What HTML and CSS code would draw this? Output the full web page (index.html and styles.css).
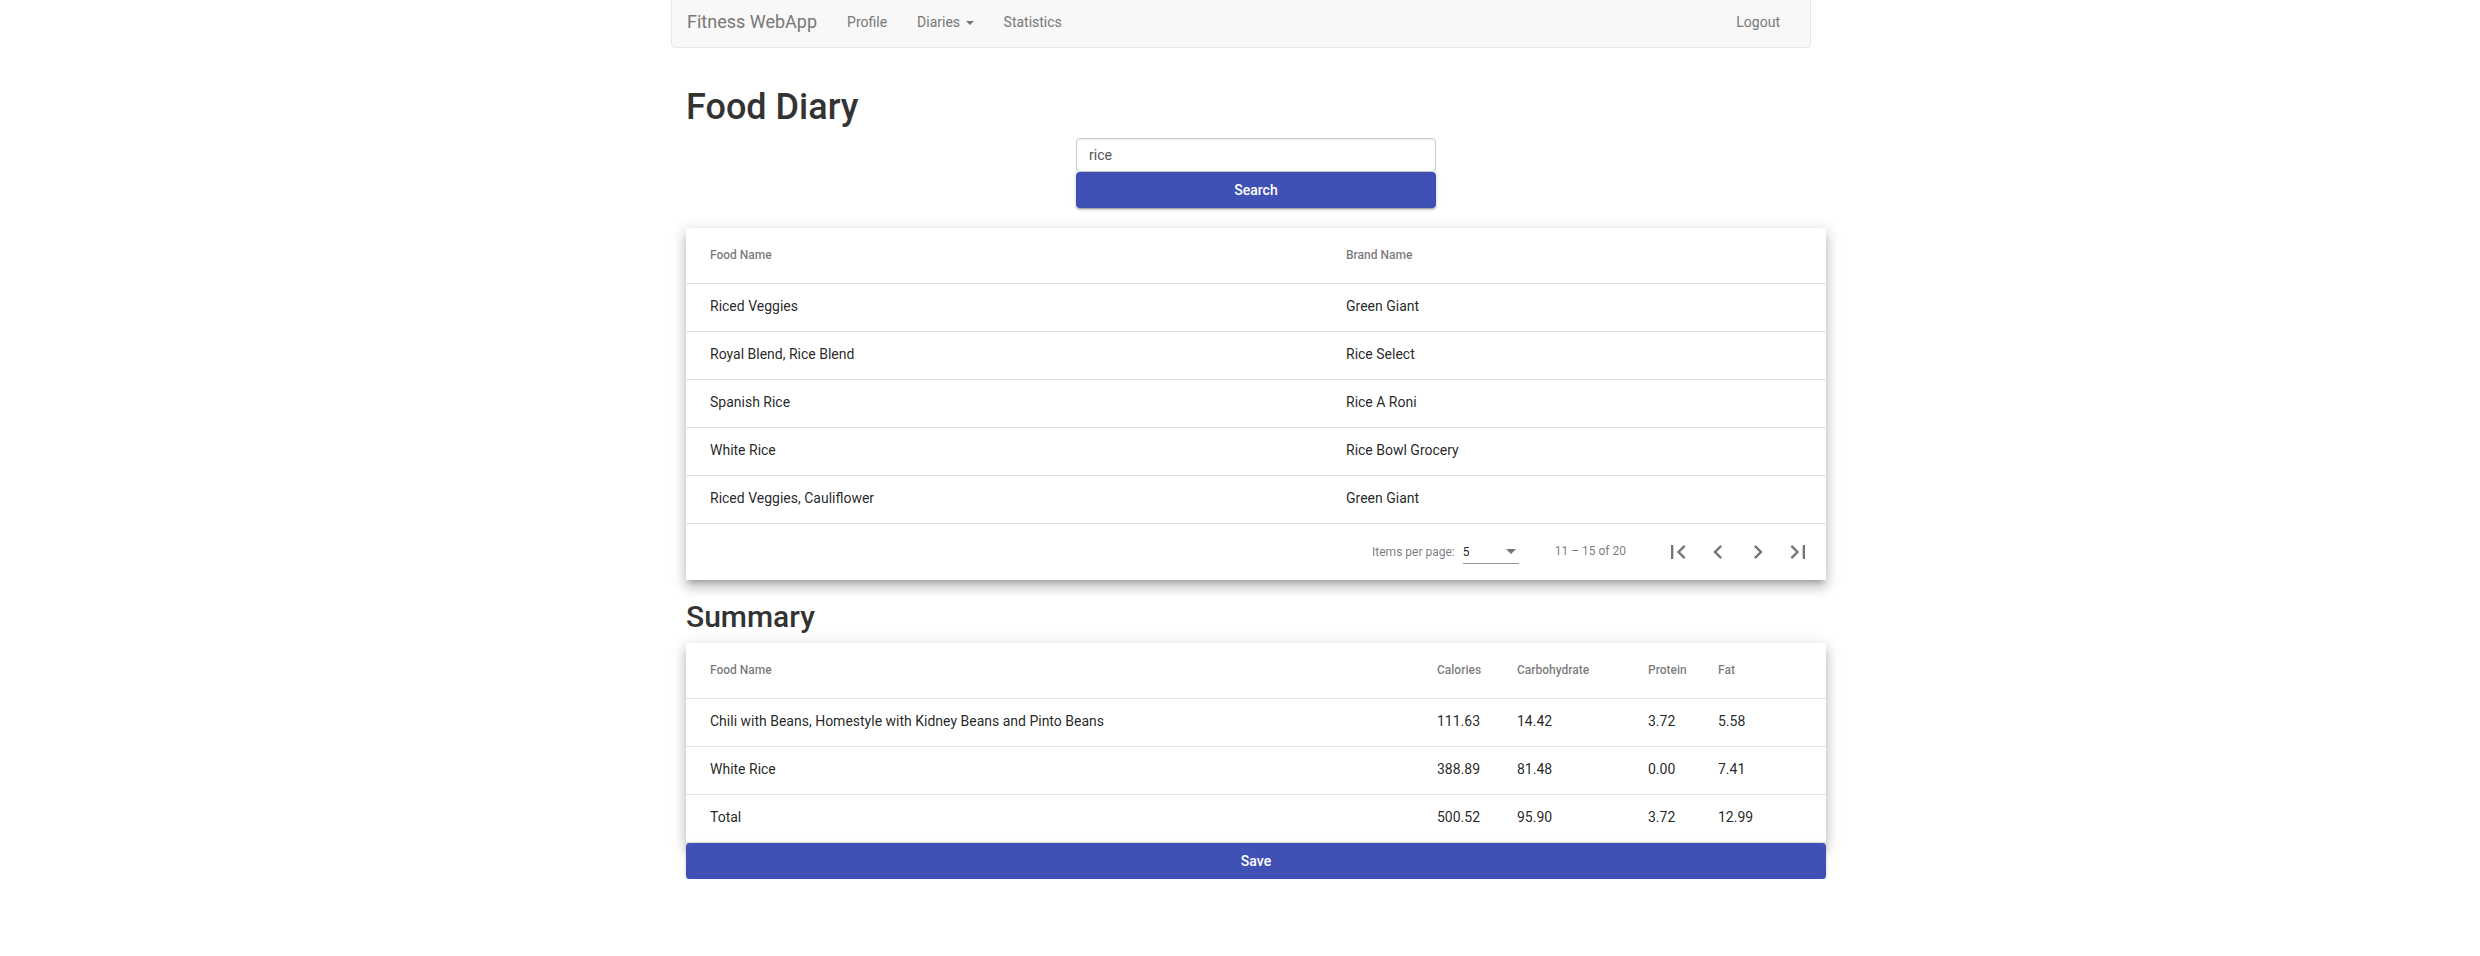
FILE: index.html
```html
<!DOCTYPE html>
<html lang="en">
<head>
<meta charset="utf-8">
<title>Fitness WebApp</title>
<link rel="stylesheet" href="styles.css">
</head>
<body>
<div class="page">
  <nav class="navbar">
    <div class="nav-left">
      <a class="brand">Fitness WebApp</a>
      <a class="nav-link">Profile</a>
      <a class="nav-link">Diaries <span class="caret"></span></a>
      <a class="nav-link">Statistics</a>
    </div>
    <div class="nav-right">
      <a class="nav-link">Logout</a>
    </div>
  </nav>

  <main class="content">
    <h1 class="title">Food Diary</h1>
    <form class="search-form">
      <input class="search-input" type="text" value="rice">
      <button class="btn-primary" type="button">Search</button>
    </form>

    <div class="card">
      <table class="mtable results">
        <colgroup><col class="c-food"><col class="c-brand"></colgroup>
        <thead>
          <tr class="hrow"><th>Food Name</th><th>Brand Name</th></tr>
        </thead>
        <tbody>
          <tr class="drow"><td>Riced Veggies</td><td>Green Giant</td></tr>
          <tr class="drow"><td>Royal Blend, Rice Blend</td><td>Rice Select</td></tr>
          <tr class="drow"><td>Spanish Rice</td><td>Rice A Roni</td></tr>
          <tr class="drow"><td>White Rice</td><td>Rice Bowl Grocery</td></tr>
          <tr class="drow"><td>Riced Veggies, Cauliflower</td><td>Green Giant</td></tr>
        </tbody>
      </table>
      <div class="paginator">
        <div class="page-size">
          <span class="page-size-label">Items per page:</span>
          <div class="select"><span class="select-value">5</span><span class="select-arrow"></span></div>
        </div>
        <div class="range-label">11 – 15 of 20</div>
        <button class="icon-btn" type="button" aria-label="First page"><svg viewBox="0 0 24 24"><path d="M18.41 16.59L13.82 12l4.59-4.59L17 6l-6 6 6 6zM6 6h2v12H6z"/></svg></button>
        <button class="icon-btn" type="button" aria-label="Previous page"><svg viewBox="0 0 24 24"><path d="M15.41 7.41L14 6l-6 6 6 6 1.41-1.41L10.83 12z"/></svg></button>
        <button class="icon-btn" type="button" aria-label="Next page"><svg viewBox="0 0 24 24"><path d="M10 6L8.59 7.41 13.17 12l-4.58 4.59L10 18l6-6z"/></svg></button>
        <button class="icon-btn" type="button" aria-label="Last page"><svg viewBox="0 0 24 24"><path d="M5.59 7.41L10.18 12l-4.59 4.59L7 18l6-6-6-6zM16 6h2v12h-2z"/></svg></button>
      </div>
    </div>

    <h2 class="subtitle">Summary</h2>
    <div class="card">
      <table class="mtable summary">
        <colgroup><col class="s-food"><col class="s-cal"><col class="s-carb"><col class="s-prot"><col class="s-fat"></colgroup>
        <thead>
          <tr class="hrow"><th>Food Name</th><th>Calories</th><th>Carbohydrate</th><th>Protein</th><th>Fat</th></tr>
        </thead>
        <tbody>
          <tr class="drow"><td>Chili with Beans, Homestyle with Kidney Beans and Pinto Beans</td><td>111.63</td><td>14.42</td><td>3.72</td><td>5.58</td></tr>
          <tr class="drow"><td>White Rice</td><td>388.89</td><td>81.48</td><td>0.00</td><td>7.41</td></tr>
          <tr class="drow"><td>Total</td><td>500.52</td><td>95.90</td><td>3.72</td><td>12.99</td></tr>
        </tbody>
      </table>
    </div>
    <button class="btn-primary btn-block" type="button">Save</button>
  </main>
</div>
</body>
</html>
```
FILE: styles.css
```css
* { box-sizing: border-box; }

html, body {
  margin: 0;
  background: #fff;
}

body {
  padding-left: 2px;
  font-family: Roboto, "Helvetica Neue", sans-serif;
  font-size: 14px;
  line-height: 1.42857;
  color: #333;
}

.page {
  width: 1140px;
  margin: 0 auto;
}

/* Navbar */
.navbar {
  margin-top: -4px;
  margin-bottom: 20px;
  min-height: 52px;
  background: #f8f8f8;
  border: 1px solid #e7e7e7;
  border-radius: 4px;
  display: flex;
  justify-content: space-between;
  padding: 0 15px;
}

.nav-left, .nav-right { display: flex; }

.brand {
  margin-left: -15px;
  padding: 15px;
  height: 50px;
  font-size: 18px;
  line-height: 20px;
  color: #777;
}

.nav-link {
  padding: 15px;
  line-height: 20px;
  font-size: 14px;
  color: #777;
}

.caret {
  display: inline-block;
  width: 0;
  height: 0;
  margin-left: 2px;
  vertical-align: middle;
  border-top: 4px solid;
  border-right: 4px solid transparent;
  border-left: 4px solid transparent;
}

/* Content */
.content {
  display: flow-root;
  margin-left: 15px;
  width: 1140px;
}

.title {
  font-size: 36px;
  font-weight: 500;
  line-height: 1.1;
  margin: 20px 0 10px;
  color: #333;
}

.subtitle {
  font-size: 30px;
  font-weight: 500;
  line-height: 1.1;
  margin: 20px 0 10px;
  color: #333;
}

.search-form {
  width: 360px;
  margin: 0 auto 20px;
  display: flex;
  flex-direction: column;
}

.search-input {
  height: 34px;
  padding: 6px 12px;
  font-family: inherit;
  font-size: 14px;
  color: #555;
  background: #fff;
  border: 1px solid #ccc;
  border-radius: 4px;
  box-shadow: inset 0 1px 1px rgba(0,0,0,.075);
  outline: none;
}

.btn-primary {
  height: 36px;
  padding: 0 16px;
  background: #3f51b5;
  color: #fff;
  border: none;
  border-radius: 4px;
  font-family: Roboto, "Helvetica Neue", sans-serif;
  font-size: 14px;
  font-weight: 500;
  box-shadow: 0 3px 1px -2px rgba(0,0,0,.2), 0 2px 2px 0 rgba(0,0,0,.14), 0 1px 5px 0 rgba(0,0,0,.12);
}

.btn-block {
  display: block;
  width: 100%;
}

/* Card / table */
.card {
  background: #fff;
  box-shadow: 0 5px 5px -3px rgba(0,0,0,.2), 0 8px 10px 1px rgba(0,0,0,.14), 0 3px 14px 2px rgba(0,0,0,.12);
}

.mtable {
  width: 100%;
  table-layout: fixed;
  border-spacing: 0;
}

.c-food { width: 660px; }
.c-brand { width: 480px; }

.s-food { width: 751px; }
.s-cal { width: 80px; }
.s-carb { width: 131px; }
.s-prot { width: 70px; }
.s-fat { width: 108px; }

.hrow { height: 56px; }
.drow { height: 48px; }

.mtable th {
  padding: 0;
  text-align: left;
  font-size: 12px;
  font-weight: 500;
  color: rgba(0,0,0,.54);
  border-bottom: 1px solid rgba(0,0,0,.12);
}

.mtable td {
  padding: 0;
  font-size: 14px;
  color: rgba(0,0,0,.87);
  border-bottom: 1px solid rgba(0,0,0,.12);
}

.mtable th:first-child, .mtable td:first-child { padding-left: 24px; }
.mtable th:last-child, .mtable td:last-child { padding-right: 24px; }

/* Paginator */
.paginator {
  display: flex;
  justify-content: flex-end;
  align-items: center;
  min-height: 56px;
  padding: 0 8px;
  font-size: 12px;
  color: rgba(0,0,0,.54);
}

.page-size {
  display: flex;
  align-items: baseline;
  margin-right: 8px;
}

.page-size-label {
  margin: 0 4px;
  line-height: 16px;
}

.select {
  width: 56px;
  margin: 0 4px;
  padding: 4px 0 3px;
  display: flex;
  justify-content: space-between;
  align-items: center;
  line-height: 16px;
  border-bottom: 1px solid rgba(0,0,0,.42);
}

.select-value { color: rgba(0,0,0,.87); }

.select-arrow {
  width: 0;
  height: 0;
  margin-right: 3px;
  border-left: 5px solid transparent;
  border-right: 5px solid transparent;
  border-top: 5px solid rgba(0,0,0,.54);
}

.range-label {
  margin: 0 32px 0 24px;
}

.icon-btn {
  width: 40px;
  height: 40px;
  padding: 0;
  border: none;
  background: transparent;
  display: flex;
  align-items: center;
  justify-content: center;
}

.icon-btn svg {
  width: 28px;
  height: 28px;
  fill: rgba(0,0,0,.54);
}
```
